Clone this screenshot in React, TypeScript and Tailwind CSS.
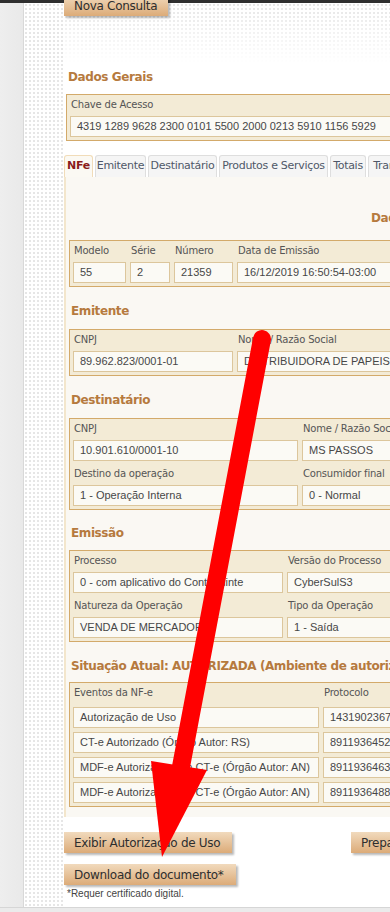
import React from "react"

const dv = "font-['DejaVu_Sans',Verdana,sans-serif]"

function Btn({ children, className = "" }: { children: React.ReactNode; className?: string }) {
  return (
    <div
      className={`h-[21px] flex items-center px-[10px] bg-[linear-gradient(to_bottom,#f1dabd,#dcab78)] shadow-[2px_2px_2px_rgba(0,0,0,0.28)] text-[12px] tracking-[-0.3px] text-[#2e2e2e] whitespace-nowrap ${className}`}
    >
      {children}
    </div>
  )
}

function Heading({ children, className = "" }: { children: React.ReactNode; className?: string }) {
  return (
    <div className={`h-[16px] leading-[16px] text-[12px] font-bold tracking-[-0.4px] text-[#b67a3e] whitespace-nowrap ${className}`}>
      {children}
    </div>
  )
}

function Label({ children }: { children: React.ReactNode }) {
  return (
    <div className="h-[14px] leading-[14px] mb-[4px] pl-[1px] text-[10px] tracking-[-0.2px] text-[#555] whitespace-nowrap">
      {children}
    </div>
  )
}

function Inp({ v, w = "" }: { v: string; w?: string }) {
  return (
    <div
      className={`h-[21px] border border-[#dcc69c] bg-[#fbfaf5] px-[6px] flex items-center text-[11px] text-[#474747] font-['Liberation_Sans',Arial,sans-serif] whitespace-nowrap overflow-hidden ${w}`}
    >
      {v}
    </div>
  )
}

function Field({ label, v, w }: { label: string; v: string; w: string }) {
  return (
    <div className={`shrink-0 ${w}`}>
      <Label>{label}</Label>
      <Inp v={v} />
    </div>
  )
}

function Box({ children, className = "" }: { children: React.ReactNode; className?: string }) {
  return (
    <div className={`border border-[#d3aa6a] bg-[#f3ebd6] pt-[3px] pb-[3px] px-[3px] ${className}`}>{children}</div>
  )
}

const tabs = [
  { t: "NFe", w: "w-[29px]" },
  { t: "Emitente", w: "w-[51px]" },
  { t: "Destinatário", w: "w-[69px]" },
  { t: "Produtos e Serviços", w: "w-[109px]" },
  { t: "Totais", w: "w-[36px]" },
  { t: "Transporte", w: "w-[66px]" },
]

const eventos = [
  ["Autorização de Uso", "143190236755123"],
  ["CT-e Autorizado (Órgão Autor: RS)", "891193645231234"],
  ["MDF-e Autorizado com CT-e (Órgão Autor: AN)", "891193646312345"],
  ["MDF-e Autorizado com CT-e (Órgão Autor: AN)", "891193648812345"],
]

export default function App() {
  return (
    <div className={`relative w-[390px] h-[912px] overflow-hidden bg-[#ececec] ${dv}`}>
      <div className="h-[3px] bg-[#2f2f2f]" />
      <div className="flex h-[904px]">
        <div className="w-[23px] shrink-0 bg-[linear-gradient(to_right,#eeeeee,#e9e9e9)]" />
        <div className="w-[1px] shrink-0 bg-[#d8d8d8]" />
        <div className="flex-1 flex bg-white bg-[radial-gradient(#e6e6e6_1px,transparent_1.4px)] bg-[length:4px_4px]">
          <div className="w-[40px] shrink-0" />
          <div className="w-[560px] shrink-0 bg-[linear-gradient(to_bottom,rgba(255,255,255,0)_0px,#fff_60px)]">
            <Btn className="mt-[-8px] w-[104px]">Nova Consulta</Btn>

            <Heading className="mt-[53px] ml-[4px]">Dados Gerais</Heading>
            <Box className="mt-[9px] ml-[2px]">
              <Label>Chave de Acesso</Label>
              <Inp v="4319 1289 9628 2300 0101 5500 2000 0213 5910 1156 5929" />
            </Box>

            <div className="mt-[14px] flex gap-[2px] h-[22px] items-end">
              {tabs.map((tab, i) => (
                <div
                  key={tab.t}
                  className={`${tab.w} shrink-0 h-[22px] rounded-t-[3px] border border-b-0 flex items-center justify-center overflow-hidden whitespace-nowrap text-[11px] tracking-[-0.3px] ${
                    i === 0
                      ? "bg-[#fbf9f3] border-[#f1dcb9] text-[#8a1c1c] font-bold"
                      : "bg-[#f5f5f5] border-[#dedede] text-[#4f5868]"
                  }`}
                >
                  {tab.t}
                </div>
              ))}
            </div>

            <div className="border-l-2 border-[#f3e6cc] bg-[#faf8f3] pl-[3px] pt-[33px] pb-[10px]">
              <Heading className="pl-[302px]">Dados da NF-e</Heading>
              <Box className="mt-[14px]">
                <div className="flex gap-[4px]">
                  <Field label="Modelo" v="55" w="w-[53px]" />
                  <Field label="Série" v="2" w="w-[40px]" />
                  <Field label="Número" v="21359" w="w-[59px]" />
                  <Field label="Data de Emissão" v="16/12/2019 16:50:54-03:00" w="w-[240px]" />
                </div>
              </Box>

              <Heading className="mt-[16px] ml-[2px]">Emitente</Heading>
              <Box className="mt-[10px]">
                <div className="flex gap-[4px]">
                  <Field label="CNPJ" v="89.962.823/0001-01" w="w-[160px]" />
                  <Field label="Nome / Razão Social" v="DISTRIBUIDORA DE PAPEIS LTDA" w="w-[300px]" />
                </div>
              </Box>

              <Heading className="mt-[16px] ml-[2px]">Destinatário</Heading>
              <Box className="mt-[10px]">
                <div className="flex gap-[4px]">
                  <Field label="CNPJ" v="10.901.610/0001-10" w="w-[225px]" />
                  <Field label="Nome / Razão Social" v="MS PASSOS" w="w-[225px]" />
                </div>
                <div className="flex gap-[4px] mt-[6px]">
                  <Field label="Destino da operação" v="1 - Operação Interna" w="w-[225px]" />
                  <Field label="Consumidor final" v="0 - Normal" w="w-[225px]" />
                </div>
              </Box>

              <Heading className="mt-[15px] ml-[2px]">Emissão</Heading>
              <Box className="mt-[9px]">
                <div className="flex gap-[4px]">
                  <Field label="Processo" v="0 - com aplicativo do Contribuinte" w="w-[210px]" />
                  <Field label="Versão do Processo" v="CyberSulS3" w="w-[210px]" />
                </div>
                <div className="flex gap-[4px] mt-[6px]">
                  <Field label="Natureza da Operação" v="VENDA DE MERCADORIA" w="w-[210px]" />
                  <Field label="Tipo da Operação" v="1 - Saída" w="w-[210px]" />
                </div>
              </Box>

              <Heading className="mt-[16px] ml-[2px]">Situação Atual: AUTORIZADA (Ambiente de autorização: produção)</Heading>
              <Box className="mt-[8px]">
                <div className="flex gap-[4px]">
                  <div className="w-[246px] shrink-0">
                    <Label>Eventos da NF-e</Label>
                  </div>
                  <div className="w-[200px] shrink-0">
                    <Label>Protocolo</Label>
                  </div>
                </div>
                <div className="flex flex-col gap-[4px] mt-[3px]">
                  {eventos.map(([e, p], i) => (
                    <div key={i} className="flex gap-[4px]">
                      <Inp v={e} w="w-[246px] shrink-0" />
                      <Inp v={p} w="w-[200px] shrink-0" />
                    </div>
                  ))}
                </div>
              </Box>
            </div>

            <div className="mt-[15px] flex">
              <Btn className="w-[168px]">Exibir Autorização de Uso</Btn>
              <Btn className="ml-[119px] w-[150px]">Preparar Impressão</Btn>
            </div>
            <Btn className="mt-[11px] w-[172px]">Download do documento*</Btn>
            <div className="mt-[3px] ml-[3px] text-[10px] leading-[12px] text-[#444] font-['Liberation_Sans',Arial,sans-serif]">
              *Requer certificado digital.
            </div>
          </div>
        </div>
      </div>
      <div className="h-[1px] bg-[#d6d6d6]" />
      <div className="h-[4px] bg-[#ebebeb]" />

      <svg className="absolute inset-0 pointer-events-none" width="390" height="912" viewBox="0 0 390 912">
        <line x1="262" y1="339" x2="180" y2="772" stroke="#ff0000" strokeWidth="18" strokeLinecap="round" />
        <polygon points="151,761 207,770 162,857" fill="#ff0000" />
      </svg>
    </div>
  )
}
